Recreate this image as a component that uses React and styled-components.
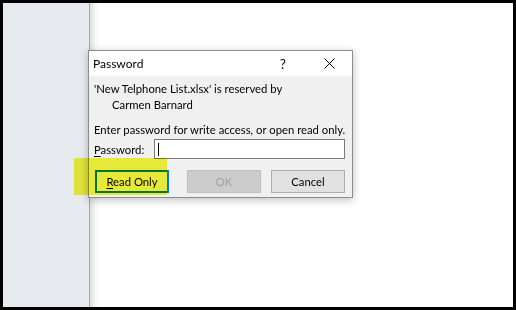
import styled, { createGlobalStyle } from "styled-components";

const GlobalStyle = createGlobalStyle`
  html, body {
    margin: 0;
    padding: 0;
    width: 516px;
    height: 310px;
    overflow: hidden;
    background: #000;
  }
  * { box-sizing: border-box; }
`;

const Frame = styled.div`
  position: relative;
  width: 516px;
  height: 310px;
  border: 3px solid #000;
  display: flex;
  background: #fff;
  font-family: Lato, "Noto Sans", sans-serif;
  font-size: 11.3px;
  font-weight: 400;
  color: #000;
  overflow: hidden;
`;

const SidePane = styled.div`
  width: 87px;
  background: #e7eaee;
  border-right: 1px solid #a8a8a8;
`;

const Workspace = styled.div`
  flex: 1;
  background: linear-gradient(to right, #dcdcdc 0px, #f6f6f6 5px, #fff 10px);
`;

/* marker highlight laid over the dialog, blended like a highlighter pen */
const Highlight = styled.div`
  position: absolute;
  left: 71px;
  top: 155px;
  width: 93px;
  height: 37px;
  background: #f6f83c;
  mix-blend-mode: multiply;
  pointer-events: none;
`;

const Dialog = styled.div`
  position: absolute;
  left: 85px;
  top: 47px;
  width: 265px;
  height: 148px;
  background: #f0f0f0;
  border: 1px solid #8c8c8c;
  box-shadow: 0 2px 8px rgba(0, 0, 0, 0.25);
  display: flex;
  flex-direction: column;
`;

const TitleBar = styled.div`
  flex: 0 0 25px;
  background: #fff;
  display: flex;
  align-items: center;
  padding-left: 4px;
  font-size: 12px;
`;

const Title = styled.span`
  flex: 1;
`;

const TitleButton = styled.span`
  width: 46px;
  display: flex;
  justify-content: center;
  align-items: center;
  font-size: 13px;
`;

const Body = styled.div`
  padding: 5px 7px 0 5px;
  display: flex;
  flex-direction: column;
  white-space: nowrap;
`;

const Line = styled.div`
  line-height: 16px;
  padding-left: ${({ $indent }) => $indent || 0}px;
`;

const Note = styled(Line)`
  margin-top: 9px;
`;

const FieldRow = styled.div`
  display: flex;
  align-items: center;
  margin-top: 1px;
`;

const Label = styled.span`
  flex: 1;
  & u { text-decoration-thickness: 1px; text-underline-offset: 2px; }
`;

const Input = styled.div`
  width: 191px;
  height: 20px;
  background: #fff;
  border: 1px solid #7a7a7a;
  display: flex;
  align-items: center;
  padding-left: 3px;
`;

const Caret = styled.span`
  width: 1px;
  height: 13px;
  background: #000;
`;

const ButtonRow = styled.div`
  display: flex;
  gap: 10px;
  margin-top: 11px;
  padding-left: 1px;
`;

const Button = styled.div`
  width: 75px;
  height: 23px;
  display: flex;
  align-items: center;
  justify-content: center;
  border: 1px solid ${({ $variant }) =>
    $variant === "primary" ? "#0078d7" : $variant === "disabled" ? "#bfbfbf" : "#adadad"};
  background: ${({ $variant }) =>
    $variant === "primary" ? "#f0f0f0" : $variant === "disabled" ? "#cccccc" : "#e1e1e1"};
  color: ${({ $variant }) => ($variant === "disabled" ? "#a0a0a0" : "#000")};
  box-shadow: ${({ $variant }) => ($variant === "primary" ? "inset 0 0 0 1px #0078d7" : "none")};
  margin-right: ${({ $variant }) => ($variant === "primary" ? "8px" : "0")};
  & u { text-underline-offset: 2px; }
`;

export default function App() {
  return (
    <>
      <GlobalStyle />
      <Frame>
        <SidePane />
        <Workspace />
        <Dialog>
          <TitleBar>
            <Title>Password</Title>
            <TitleButton>?</TitleButton>
            <TitleButton>
              <svg width="11" height="11" viewBox="0 0 11 11">
                <path d="M0.5 0.5 L10.5 10.5 M10.5 0.5 L0.5 10.5" stroke="#000" strokeWidth="1" />
              </svg>
            </TitleButton>
          </TitleBar>
          <Body>
            <Line>'New Telphone List.xlsx' is reserved by</Line>
            <Line $indent={18}>Carmen Barnard</Line>
            <Note>Enter password for write access, or open read only.</Note>
            <FieldRow>
              <Label>
                <u>P</u>assword:
              </Label>
              <Input>
                <Caret />
              </Input>
            </FieldRow>
            <ButtonRow>
              <Button $variant="primary">
                <span>
                  <u>R</u>ead Only
                </span>
              </Button>
              <Button $variant="disabled">OK</Button>
              <Button>Cancel</Button>
            </ButtonRow>
          </Body>
        </Dialog>
        <Highlight />
      </Frame>
    </>
  );
}
